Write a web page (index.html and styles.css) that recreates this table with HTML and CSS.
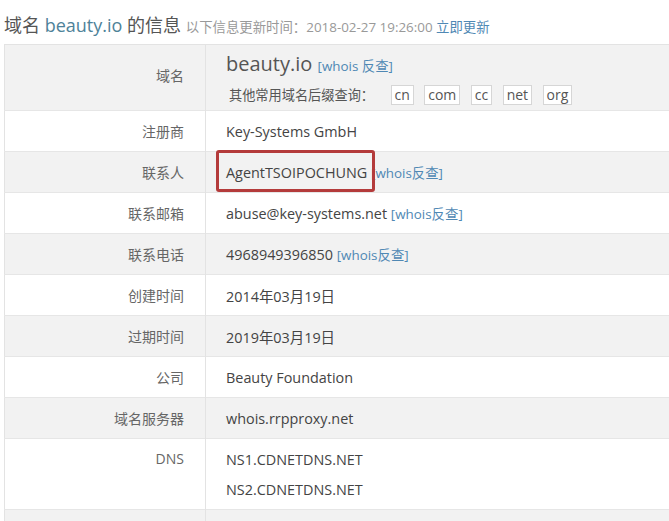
FILE: index.html
```html
<!DOCTYPE html>
<html lang="zh-CN">
<head>
  <meta charset="UTF-8" />
  <meta name="viewport" content="width=device-width, initial-scale=1.0" />
  <title>域名 beauty.io 的信息</title>
  <link rel="stylesheet" href="styles.css">
</head>
<body>
  <div class="page">
    <h2 class="title">
      域名 <span class="domain">beauty.io</span> 的信息
      <small>以下信息更新时间：2018-02-27 19:26:00 <a href="#">立即更新</a></small>
    </h2>

    <table class="whois">
      <tr class="gray tall">
        <th>域名</th>
        <td>
          <div class="main-domain">beauty.io <a href="#">[whois 反查]</a></div>
          <div class="suffix">其他常用域名后缀查询：
            <span class="tags">
              <a href="#" class="tag">cn</a>
              <a href="#" class="tag">com</a>
              <a href="#" class="tag">cc</a>
              <a href="#" class="tag">net</a>
              <a href="#" class="tag">org</a>
            </span>
          </div>
        </td>
      </tr>
      <tr>
        <th>注册商</th>
        <td>Key-Systems GmbH</td>
      </tr>
      <tr class="gray">
        <th>联系人</th>
        <td><span class="marked">AgentTSOIPOCHUNG</span> <a href="#">[whois反查]</a></td>
      </tr>
      <tr>
        <th>联系邮箱</th>
        <td>abuse@key-systems.net <a href="#">[whois反查]</a></td>
      </tr>
      <tr class="gray">
        <th>联系电话</th>
        <td>4968949396850 <a href="#">[whois反查]</a></td>
      </tr>
      <tr>
        <th>创建时间</th>
        <td>2014年03月19日</td>
      </tr>
      <tr class="gray">
        <th>过期时间</th>
        <td>2019年03月19日</td>
      </tr>
      <tr>
        <th>公司</th>
        <td>Beauty Foundation</td>
      </tr>
      <tr class="gray">
        <th>域名服务器</th>
        <td>whois.rrpproxy.net</td>
      </tr>
      <tr class="dns">
        <th>DNS</th>
        <td>
          <div>NS1.CDNETDNS.NET</div>
          <div>NS2.CDNETDNS.NET</div>
        </td>
      </tr>
      <tr class="gray last">
        <th></th>
        <td></td>
      </tr>
    </table>
  </div>
</body>
</html>
```

FILE: styles.css
```css
* {
  margin: 0;
  padding: 0;
  box-sizing: border-box;
}

html, body {
  background: #fff;
  font-family: 'Open Sans', 'Noto Sans CJK SC', sans-serif;
  color: #444;
  overflow: hidden;
}

a {
  color: #4f88b4;
  text-decoration: none;
}

.page {
  padding: 12px 0 0 4px;
  width: 700px;
}

.title {
  font-size: 18px;
  font-weight: normal;
  color: #555;
  height: 32px;
  line-height: 26px;
  white-space: nowrap;
}

.title .domain {
  color: #4e8299;
}

.title small {
  font-size: 13.4px;
  color: #999;
}

.whois {
  width: 100%;
  border-collapse: collapse;
  border-left: 1px solid #e3e3e3;
  border-top: 1px solid #e3e3e3;
  font-size: 14.4px;
}

.whois tr {
  height: 41px;
  border-bottom: 1px solid #e6e6e6;
}

.whois tr.gray {
  background: #f2f2f2;
}

.whois tr.tall {
  height: 66px;
}

.whois tr.dns {
  height: 71px;
}

.whois tr.last {
  height: 12px;
}

.whois th {
  width: 201px;
  padding-right: 21px;
  text-align: right;
  font-weight: normal;
  font-size: 14px;
  color: #666;
  vertical-align: middle;
  border-right: 1px solid #e3e3e3;
}

.whois td {
  padding-left: 20px;
  color: #444;
  vertical-align: middle;
}

.whois td a {
  font-size: 13.4px;
}

.whois tr.tall th {
  vertical-align: top;
  padding-top: 20px;
}

.main-domain {
  font-size: 20px;
  line-height: 26px;
  color: #555;
}

.suffix {
  font-size: 13.2px;
  color: #555;
  margin-top: 6px;
  padding-left: 3px;
}

.tags {
  margin-left: 6px;
}

.whois td .suffix .tag {
  display: inline-block;
  border: 1px solid #d6d6d6;
  background: #fff;
  color: #555;
  font-size: 14px;
  line-height: 18px;
  padding: 0 3px;
  margin-left: 7px;
}

.whois tr.dns th,
.whois tr.dns td {
  vertical-align: top;
  padding-top: 10px;
}

.whois tr.dns td div {
  line-height: 22px;
  margin-bottom: 8px;
}

.marked {
  position: relative;
}

.marked::after {
  content: '';
  position: absolute;
  left: -10px;
  right: -8px;
  top: -13px;
  bottom: -10px;
  border: 3px solid #b43b3b;
  border-radius: 3px;
}
```
